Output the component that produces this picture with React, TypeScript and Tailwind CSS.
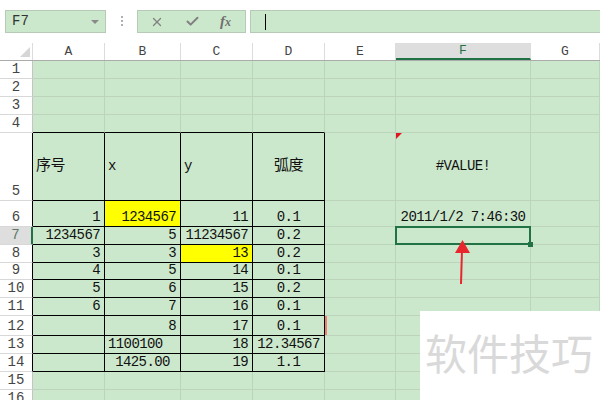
import { Check, X } from "lucide-react";

type Cell = { t?: string; a?: "l" | "r" | "c"; hl?: boolean; zh?: boolean };
type Row = { n: number; h: string; mid?: boolean; cells: Cell[] };

const E: Cell = {};
const COLS = "grid grid-cols-[33px_72px_76px_72px_72px_71px_135px_1fr]";
const LETTERS = ["A", "B", "C", "D", "E", "F", "G"];

const rows: Row[] = [
  { n: 1, h: "h-[18px]", cells: [] },
  { n: 2, h: "h-[18px]", cells: [] },
  { n: 3, h: "h-[18px]", cells: [] },
  { n: 4, h: "h-[18px]", cells: [] },
  {
    n: 5,
    h: "h-[68px]",
    mid: true,
    cells: [
      { t: "序号", a: "l", zh: true },
      { t: "x", a: "l" },
      { t: "y", a: "l" },
      { t: "弧度", a: "c", zh: true },
      E,
      { t: "#VALUE!", a: "c" },
    ],
  },
  {
    n: 6,
    h: "h-[26px]",
    cells: [{ t: "1" }, { t: "1234567", hl: true }, { t: "11" }, { t: "0.1", a: "c" }, E, { t: "2011/1/2 7:46:30", a: "c" }],
  },
  { n: 7, h: "h-[18px]", cells: [{ t: "1234567" }, { t: "5" }, { t: "11234567" }, { t: "0.2", a: "c" }] },
  { n: 8, h: "h-[18px]", cells: [{ t: "3" }, { t: "3" }, { t: "13", hl: true }, { t: "0.2", a: "c" }] },
  { n: 9, h: "h-[17px]", cells: [{ t: "4" }, { t: "5" }, { t: "14" }, { t: "0.1", a: "c" }] },
  { n: 10, h: "h-[18px]", cells: [{ t: "5" }, { t: "6" }, { t: "15" }, { t: "0.2", a: "c" }] },
  { n: 11, h: "h-[18px]", cells: [{ t: "6" }, { t: "7" }, { t: "16" }, { t: "0.1", a: "c" }] },
  { n: 12, h: "h-[20px]", cells: [E, { t: "8" }, { t: "17" }, { t: "0.1", a: "c" }] },
  { n: 13, h: "h-[18px]", cells: [E, { t: "1100100", a: "l" }, { t: "18" }, { t: "12.34567", a: "c" }] },
  { n: 14, h: "h-[18px]", cells: [E, { t: "1425.00", a: "c" }, { t: "19" }, { t: "1.1", a: "c" }] },
  { n: 15, h: "h-[18px]", cells: [] },
  { n: 16, h: "h-[18px]", cells: [] },
];

function Toolbar() {
  return (
    <div className="flex h-[43px] items-start bg-white pt-[10px]">
      <div className="ml-[5px] flex h-[23px] w-[101px] items-center justify-between border border-[#b7cab7] bg-[#cce8cc] pl-[6px] pr-[6px]">
        <span className="text-[14px] text-[#333]">F7</span>
        <span className="h-0 w-0 border-l-[4px] border-r-[4px] border-t-[4px] border-l-transparent border-r-transparent border-t-[#8a8a8a]" />
      </div>
      <div className="ml-[15px] mt-[6px] flex w-[2px] flex-col gap-[2px]">
        <span className="h-[2px] w-[2px] bg-[#b0b0b0]" />
        <span className="h-[2px] w-[2px] bg-[#b0b0b0]" />
        <span className="h-[2px] w-[2px] bg-[#b0b0b0]" />
      </div>
      <div className="ml-[14px] flex h-[23px] w-[109px] items-center border border-[#b7cab7] bg-[#cce8cc] pl-[12px]">
        <X size={14} strokeWidth={2.2} className="text-[#808080]" />
        <Check size={15} strokeWidth={3.2} className="ml-[21px] text-[#808080]" />
        <span className="ml-[20px] font-['Liberation_Serif',serif] text-[15px] font-bold italic text-[#707070]">
          f<span className="text-[12px]">x</span>
        </span>
      </div>
      <div className="ml-[4px] flex h-[23px] flex-1 items-center border-y border-l border-[#b7cab7] bg-[#cce8cc] pl-[14px]">
        <span className="h-[16px] w-px bg-black" />
      </div>
    </div>
  );
}

function ColumnHeader() {
  return (
    <div className={`${COLS} h-[18px] border-b border-[#ababab] bg-white`}>
      <div className="flex items-end justify-end border-r border-[#dcdcdc] pb-[3px] pr-[2px]">
        <svg width="10" height="10" viewBox="0 0 10 10">
          <polygon points="10,0 10,10 0,10" fill="#d6d6d6" />
        </svg>
      </div>
      {LETTERS.map((l) =>
        l === "F" ? (
          <div
            key={l}
            className="flex items-center justify-center border-b-2 border-r border-b-[#217346] border-r-[#dcdcdc] bg-[#dedede] text-[13px] text-[#217346]"
          >
            {l}
          </div>
        ) : (
          <div key={l} className="flex items-center justify-center border-r border-[#dcdcdc] text-[13px] text-[#444]">
            {l}
          </div>
        ),
      )}
    </div>
  );
}

function GridRow({ row }: { row: Row }) {
  const inTable = row.n >= 5 && row.n <= 14;
  const selected = row.n === 7;
  return (
    <div className={`${COLS} ${row.h}`}>
      <div
        className={`flex items-end justify-center overflow-hidden border-b border-[#d8d8d8] pb-[1px] text-[14px] ${
          selected
            ? "border-r-2 border-r-[#217346] bg-[#dedede] text-[#5d7a66]"
            : inTable
              ? "border-r border-r-black bg-white text-[#444]"
              : "border-r border-r-[#c4c4c4] bg-white text-[#444]"
        }`}
      >
        {row.n}
      </div>
      {LETTERS.map((_, i) => {
        const c = row.cells[i] ?? E;
        const tableCell = inTable && i <= 3;
        const edge = tableCell
          ? "border-r border-b border-black"
          : row.n === 4 && i <= 3
            ? "border-r border-b border-r-[#bcd4bc] border-b-black"
            : "border-r border-b border-[#bcd4bc]";
        const align = c.a === "l" ? "justify-start pl-[3px]" : c.a === "c" ? "justify-center" : "justify-end pr-[4px]";
        const valign = row.mid ? "items-center" : "items-end pb-[1px]";
        return (
          <div
            key={i}
            className={`relative flex whitespace-nowrap ${edge} ${align} ${valign} ${
              c.hl ? "bg-[#ffff00]" : "bg-[#cce8cc]"
            } ${c.zh ? "text-[15px]" : "text-[14px]"} tracking-[-0.6px] text-[#111]`}
          >
            {c.t}
            {row.n === 5 && i === 5 && (
              <span className="absolute left-0 top-0 h-0 w-0 border-r-[6px] border-t-[6px] border-r-transparent border-t-[#e0161c]" />
            )}
            {row.n === 7 && i === 5 && (
              <span className="absolute -left-px -top-px bottom-[-1px] right-[-1px] z-10 border-2 border-[#217346]">
                <span className="absolute -bottom-[4px] -right-[4px] h-[5px] w-[5px] bg-[#217346]" />
              </span>
            )}
            {row.n === 12 && i === 4 && <span className="absolute left-0 top-0 h-full w-[2px] bg-[#f0806e]" />}
          </div>
        );
      })}
    </div>
  );
}

export default function App() {
  return (
    <div className="relative h-[400px] w-[600px] overflow-hidden bg-white font-['Liberation_Mono','Noto_Sans_CJK_SC',monospace] leading-[15px]">
      <Toolbar />
      <ColumnHeader />
      {rows.map((r) => (
        <GridRow key={r.n} row={r} />
      ))}
      <svg className="absolute left-[450px] top-[236px] z-20" width="26" height="52" viewBox="0 0 26 52">
        <line x1="11" y1="48" x2="12" y2="14" stroke="#e8262e" strokeWidth="2" />
        <polygon points="12.5,4 5,17 20,17" fill="#e8262e" />
      </svg>
      <div className="absolute left-[420px] top-[311px] z-20 flex h-[89px] w-[180px] bg-white pl-[5px] pt-[20px]">
        <span className="font-['Noto_Sans_CJK_SC',sans-serif] text-[42px] leading-none text-[#d9d9d9]">软件技巧</span>
      </div>
    </div>
  );
}
